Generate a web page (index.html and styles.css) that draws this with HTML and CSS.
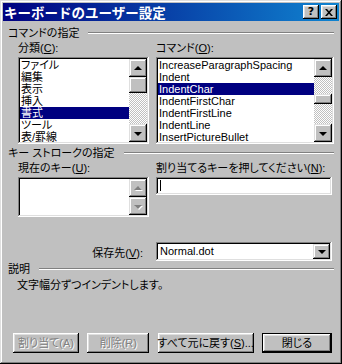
FILE: index.html
```html
<!DOCTYPE html>
<html lang="ja">
<head>
    <meta charset="UTF-8">
    <meta name="viewport" content="width=device-width, initial-scale=1.0">
    <title>キーボードのユーザー設定</title>
    <link rel="stylesheet" href="styles.css">
</head>
<body>
    <div class="window">
        <div class="titlebar">
            <span class="title">キーボードのユーザー設定</span>
            <span class="title-buttons">
                <span class="tbtn help">?</span>
                <span class="tbtn close">
                    <svg width="8" height="7" viewBox="0 0 8 7"><path d="M0 0h2l2 2.2L6 0h2L5 3.5 8 7H6L4 4.8 2 7H0l3-3.5z" fill="#000"/></svg>
                </span>
            </span>
        </div>

        <div class="content">
            <div class="group-head first"><span>コマンドの指定</span><span class="rule"></span></div>
            <div class="pair labels">
                <span>分類(<u>C</u>):</span>
                <span>コマンド(<u>O</u>):</span>
            </div>
            <div class="pair lists">
                <div class="listbox">
                    <ul class="items">
                        <li>ファイル</li>
                        <li>編集</li>
                        <li>表示</li>
                        <li>挿入</li>
                        <li class="sel">書式</li>
                        <li>ツール</li>
                        <li>表/罫線</li>
                    </ul>
                    <div class="scrollbar">
                        <span class="arrow"><i class="tri up"></i></span>
                        <span class="track"><span class="thumb"></span></span>
                        <span class="arrow"><i class="tri down"></i></span>
                    </div>
                </div>
                <div class="listbox">
                    <ul class="items">
                        <li>IncreaseParagraphSpacing</li>
                        <li>Indent</li>
                        <li class="sel">IndentChar</li>
                        <li>IndentFirstChar</li>
                        <li>IndentFirstLine</li>
                        <li>IndentLine</li>
                        <li>InsertPictureBullet</li>
                    </ul>
                    <div class="scrollbar">
                        <span class="arrow"><i class="tri up"></i></span>
                        <span class="track"><span class="thumb small"></span></span>
                        <span class="arrow"><i class="tri down"></i></span>
                    </div>
                </div>
            </div>

            <div class="group-head"><span>キー ストロークの指定</span><span class="rule"></span></div>
            <div class="pair labels">
                <span>現在のキー(<u>U</u>):</span>
                <span>割り当てるキーを押してください(<u>N</u>):</span>
            </div>
            <div class="pair keys">
                <div class="listbox short">
                    <ul class="items"></ul>
                    <div class="scrollbar">
                        <span class="arrow off"><i class="tri up"></i></span>
                        <span class="arrow off"><i class="tri down"></i></span>
                    </div>
                </div>
                <div class="field"><span class="caret"></span></div>
            </div>

            <div class="pair save">
                <span class="save-label">保存先(<u>V</u>):</span>
                <div class="combo">
                    <span class="combo-text">Normal.dot</span>
                    <span class="combo-btn"><i class="tri down"></i></span>
                </div>
            </div>

            <div class="group-head desc-head"><span>説明</span><span class="rule"></span></div>
            <p class="desc">文字幅分ずつインデントします。</p>

            <div class="buttons">
                <span class="btn disabled b-assign">割り当て(A)</span>
                <span class="btn disabled b-delete">削除(R)</span>
                <span class="btn b-reset">すべて元に戻す(<u>S</u>)...</span>
                <span class="btn default b-close">閉じる</span>
            </div>
        </div>
    </div>
</body>
</html>
```

FILE: styles.css
```css
* {
    box-sizing: border-box;
}
body {
    margin: 0;
    background: #c0c0c0;
    font-family: "Liberation Sans", "Noto Sans CJK JP", sans-serif;
    font-size: 11px;
    font-feature-settings: "palt";
    color: #000;
}
u {
    text-underline-offset: 1px;
}
.window {
    width: 342px;
    height: 364px;
    padding: 3px;
    background: #c0c0c0;
    box-shadow: inset -1px -1px #000, inset 1px 1px #dfdfdf, inset -2px -2px #808080, inset 2px 2px #fff;
    display: flex;
    flex-direction: column;
}
.titlebar {
    flex: none;
    height: 18px;
    display: flex;
    align-items: center;
    justify-content: space-between;
    padding: 0 2px 0 1px;
    background: linear-gradient(to right, #000080, #1084d0);
    color: #fff;
}
.title {
    font-family: "Noto Sans CJK JP", sans-serif;
    font-feature-settings: normal;
    font-weight: bold;
    font-size: 13.5px;
    line-height: 18px;
}
.title-buttons {
    display: flex;
    gap: 2px;
}
.tbtn {
    width: 16px;
    height: 14px;
    display: flex;
    align-items: center;
    justify-content: center;
    background: #c0c0c0;
    box-shadow: inset -1px -1px #000, inset 1px 1px #fff, inset -2px -2px #808080, inset 2px 2px #dfdfdf;
    color: #000;
    font-family: "DejaVu Sans", sans-serif;
    font-weight: bold;
    font-size: 11px;
    line-height: 14px;
}
.content {
    flex: 1;
    display: flex;
    flex-direction: column;
    padding: 0 5px 8px;
}

/* group headings with etched rule */
.group-head {
    display: flex;
    align-items: center;
    height: 12px;
    line-height: 12px;
    margin-top: 3px;
}
.group-head.first {
    margin-top: 6px;
}
.group-head.desc-head {
    margin-top: 2px;
}
.rule {
    flex: 1;
    margin-left: 9px;
    border-top: 1px solid #808080;
    border-bottom: 1px solid #fff;
}

.pair {
    display: grid;
    grid-template-columns: 131px 178px;
    column-gap: 7px;
    padding-left: 10px;
}
.labels {
    height: 12px;
    line-height: 12px;
    margin-top: 3px;
}
.labels:first-of-type {
    margin-top: 4px;
}
.lists {
    height: 87px;
    margin-top: 3px;
}
.keys {
    margin-top: 3px;
    align-items: start;
}

/* list boxes */
.listbox {
    display: flex;
    padding: 2px;
    background: #fff;
    box-shadow: inset -1px -1px #fff, inset 1px 1px #808080, inset -2px -2px #dfdfdf, inset 2px 2px #000;
    overflow: hidden;
}
.listbox.short {
    height: 40px;
}
.items {
    flex: 1;
    margin: 0;
    padding: 0;
    list-style: none;
    overflow: hidden;
}
.items li {
    height: 12px;
    line-height: 12px;
    padding-left: 1px;
    white-space: nowrap;
}
.items li.sel {
    background: #000080;
    color: #fff;
}
.scrollbar {
    width: 18px;
    display: flex;
    flex-direction: column;
}
.arrow {
    flex: none;
    height: 18px;
    display: flex;
    align-items: center;
    justify-content: center;
    background: #c0c0c0;
    box-shadow: inset -1px -1px #000, inset 1px 1px #dfdfdf, inset -2px -2px #808080, inset 2px 2px #fff;
}
.arrow.off .tri {
    filter: drop-shadow(1px 1px 0 #fff);
}
.arrow.off .tri.up {
    border-bottom-color: #808080;
}
.arrow.off .tri.down {
    border-top-color: #808080;
}
.tri {
    width: 0;
    height: 0;
    border-left: 4px solid transparent;
    border-right: 4px solid transparent;
}
.tri.up {
    border-bottom: 4px solid #000;
    margin-top: -1px;
}
.tri.down {
    border-top: 4px solid #000;
    margin-top: 1px;
}
.track {
    flex: 1;
    display: flex;
    flex-direction: column;
    background: repeating-conic-gradient(#c0c0c0 0 25%, #fff 0 50%) 0 0 / 2px 2px;
}
.thumb {
    height: 16px;
    background: #c0c0c0;
    box-shadow: inset -1px -1px #000, inset 1px 1px #dfdfdf, inset -2px -2px #808080, inset 2px 2px #fff;
}
.thumb.small {
    height: 10px;
    margin-top: 17px;
}

/* text fields */
.field {
    width: 176px;
    height: 18px;
    padding: 3px 4px;
    background: #fff;
    box-shadow: inset -1px -1px #fff, inset 1px 1px #808080, inset -2px -2px #dfdfdf, inset 2px 2px #000;
}
.caret {
    display: block;
    width: 1px;
    height: 11px;
    background: #000;
}

.save {
    margin-top: 25px;
    align-items: center;
}
.save-label {
    text-align: right;
    padding-right: 6px;
}
.combo {
    width: 176px;
    height: 19px;
    display: flex;
    align-items: stretch;
    padding: 2px;
    background: #fff;
    box-shadow: inset -1px -1px #fff, inset 1px 1px #808080, inset -2px -2px #dfdfdf, inset 2px 2px #000;
}
.combo-text {
    flex: 1;
    padding-left: 2px;
    line-height: 15px;
}
.combo-btn {
    width: 17px;
    display: flex;
    align-items: center;
    justify-content: center;
    background: #c0c0c0;
    box-shadow: inset -1px -1px #000, inset 1px 1px #dfdfdf, inset -2px -2px #808080, inset 2px 2px #fff;
}

.desc {
    margin: 4px 0 0;
    padding-left: 9px;
    line-height: 12px;
}

/* bottom buttons */
.buttons {
    margin: auto 2px 0 5px;
    display: flex;
    justify-content: space-between;
}
.btn {
    height: 20px;
    display: flex;
    align-items: center;
    justify-content: center;
    background: #c0c0c0;
    box-shadow: inset -1px -1px #000, inset 1px 1px #fff, inset -2px -2px #808080, inset 2px 2px #dfdfdf;
    line-height: 12px;
    white-space: nowrap;
}
.btn.disabled {
    color: #808080;
    text-shadow: 1px 1px #fff;
}
.btn.default {
    border: 1px solid #000;
}
.b-assign { width: 66px; }
.b-delete { width: 62px; }
.b-reset { width: 96px; }
.b-close { width: 70px; }
```
